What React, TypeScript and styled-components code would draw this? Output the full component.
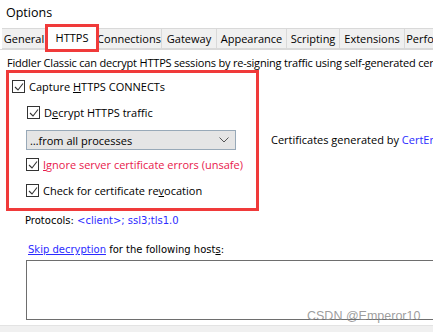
import React from "react";
import styled, { createGlobalStyle } from "styled-components";

const Global = createGlobalStyle`
  html, body { margin: 0; padding: 0; background: #fff; }
  body { font-family: "Open Sans", "Noto Sans", sans-serif; color: #000; }
`;

const Page = styled.div`
  position: relative;
  width: 433px;
  height: 332px;
  overflow: hidden;
  display: flex;
  flex-direction: column;
  background: #fff;
`;

const Title = styled.div`
  height: 25px;
  padding-left: 6px;
  font-size: 12.5px;
  line-height: 25px;
`;

const TabStrip = styled.div`
  display: flex;
  align-items: flex-end;
  height: 24px;
  padding-left: 2px;
  border-bottom: 1px solid #d9d9d9;
  white-space: nowrap;
`;

const Tab = styled.div<{ $active?: boolean; $w: number }>`
  flex: none;
  width: ${(p) => p.$w}px;
  box-sizing: border-box;
  height: ${(p) => (p.$active ? 24 : 21)}px;
  margin-bottom: ${(p) => (p.$active ? -1 : 0)}px;
  line-height: ${(p) => (p.$active ? 22 : 20)}px;
  text-align: center;
  font-size: 11px;
  background: ${(p) => (p.$active ? "#fff" : "#f0f0f0")};
  border: 1px solid #d9d9d9;
  border-bottom: ${(p) => (p.$active ? "none" : "1px solid #d9d9d9")};
  border-left: ${(p) => (p.$active ? "1px solid #d9d9d9" : "none")};
  outline: ${(p) => (p.$active ? "3px solid #f03a3a" : "none")};
  outline-offset: ${(p) => (p.$active ? "-1px" : "0")};
  position: relative;
  z-index: ${(p) => (p.$active ? 1 : 0)};
`;

const Body = styled.div`
  display: flex;
  flex-direction: column;
  flex: 1;
`;

const Intro = styled.div`
  margin: 6px 0 0 7px;
  font-size: 11px;
  letter-spacing: -0.2px;
  line-height: 14px;
  white-space: nowrap;
`;

const Row = styled.div`
  display: flex;
  align-items: flex-start;
`;

const RedBox = styled.div`
  flex: none;
  margin: 0 0 0 6px;
  width: 244px;
  height: 128px;
  border: 3px solid #f03a3a;
  display: flex;
  flex-direction: column;
  padding: 7px 0 0 3px;
  box-sizing: content-box;
`;

const CheckRow = styled.label<{ $indent: number; $mt: number; $red?: boolean }>`
  display: flex;
  align-items: center;
  gap: 4px;
  height: 13px;
  margin-left: ${(p) => p.$indent}px;
  margin-top: ${(p) => p.$mt}px;
  font-size: 11px;
  line-height: 13px;
  color: ${(p) => (p.$red ? "#e8194c" : "#000")};
  white-space: nowrap;
`;

const Box = styled.span`
  flex: none;
  width: 11px;
  height: 11px;
  border: 1px solid #333;
  background: #fff;
  display: flex;
  align-items: center;
  justify-content: center;
`;

const U = styled.span`
  text-decoration: underline;
`;

const Select = styled.div`
  margin: 11px 0 0 14px;
  width: 210px;
  height: 20px;
  box-sizing: border-box;
  border: 1px solid #98a9b8;
  background: #e5e5e5;
  display: flex;
  align-items: center;
  justify-content: space-between;
  padding: 0 6px 0 3px;
  font-size: 11px;
`;

const SideText = styled.div`
  margin: 63px 0 0 12px;
  font-size: 11px;
  line-height: 14px;
  white-space: nowrap;
`;

const Link = styled.span<{ $underline?: boolean }>`
  color: #2b2bff;
  text-decoration: ${(p) => (p.$underline ? "underline" : "none")};
`;

const SmallLine = styled.div<{ $ml: number; $mt: number }>`
  margin: ${(p) => p.$mt}px 0 0 ${(p) => p.$ml}px;
  font-family: "DejaVu Sans", sans-serif;
  font-size: 10px;
  line-height: 13px;
  white-space: nowrap;
`;

const HostBox = styled.div`
  margin: 4px 0 0 26px;
  width: 440px;
  height: 60px;
  box-sizing: border-box;
  border: 1px solid #6e6e6e;
  border-right: none;
  flex: none;
`;

const BottomBar = styled.div`
  margin-top: auto;
  height: 6px;
  background: #f0f0f0;
  border-top: 1px solid #e3e3e3;
`;

const Watermark = styled.div`
  position: absolute;
  left: 307px;
  top: 309px;
  font-family: "Liberation Sans", sans-serif;
  font-size: 12.5px;
  color: rgba(140, 140, 140, 0.85);
  white-space: nowrap;
`;

const Check = () => (
  <Box>
    <svg width="10" height="10" viewBox="0 0 10 10">
      <path d="M1 5 L4 8 L9 1.5" fill="none" stroke="#333" strokeWidth="1.1" />
    </svg>
  </Box>
);

const tabs: [string, number][] = [
  ["General", 45],
  ["HTTPS", 50],
  ["Connections", 65],
  ["Gateway", 55],
  ["Appearance", 70],
  ["Scripting", 53],
  ["Extensions", 65],
  ["Performance", 70],
];

export default function App() {
  return (
    <Page>
      <Global />
      <Title>Options</Title>
      <TabStrip>
        {tabs.map(([t, w]) => (
          <Tab key={t} $w={w} $active={t === "HTTPS"}>
            {t}
          </Tab>
        ))}
      </TabStrip>
      <Body>
        <Intro>
          Fiddler Classic can decrypt HTTPS sessions by re-signing traffic using self-generated certificates.
        </Intro>
        <Row>
          <RedBox>
            <CheckRow $indent={0} $mt={0}>
              <Check />
              <span>
                Capture <U>H</U>TTPS CONNECTs
              </span>
            </CheckRow>
            <CheckRow $indent={15} $mt={13}>
              <Check />
              <span>
                D<U>e</U>crypt HTTPS traffic
              </span>
            </CheckRow>
            <Select>
              <span>…from all processes</span>
              <svg width="10" height="6" viewBox="0 0 10 6">
                <path d="M0.5 0.5 L5 5 L9.5 0.5" fill="none" stroke="#555" strokeWidth="1" />
              </svg>
            </Select>
            <CheckRow $indent={14} $mt={8} $red>
              <Check />
              <span>
                <U>I</U>gnore server certificate errors (unsafe)
              </span>
            </CheckRow>
            <CheckRow $indent={14} $mt={13}>
              <Check />
              <span>
                Check for certificate re<U>v</U>ocation
              </span>
            </CheckRow>
          </RedBox>
          <SideText>
            Certificates generated by <Link>CertEnroll engine</Link>
          </SideText>
        </Row>
        <SmallLine $ml={25} $mt={3}>
          Protocols: <Link>&lt;client&gt;; ssl3;tls1.0</Link>
        </SmallLine>
        <SmallLine $ml={28} $mt={16}>
          <Link $underline>Skip decryption</Link> for the following host<U>s</U>:
        </SmallLine>
        <HostBox />
        <BottomBar />
      </Body>
      <Watermark>CSDN @Emperor10</Watermark>
    </Page>
  );
}
